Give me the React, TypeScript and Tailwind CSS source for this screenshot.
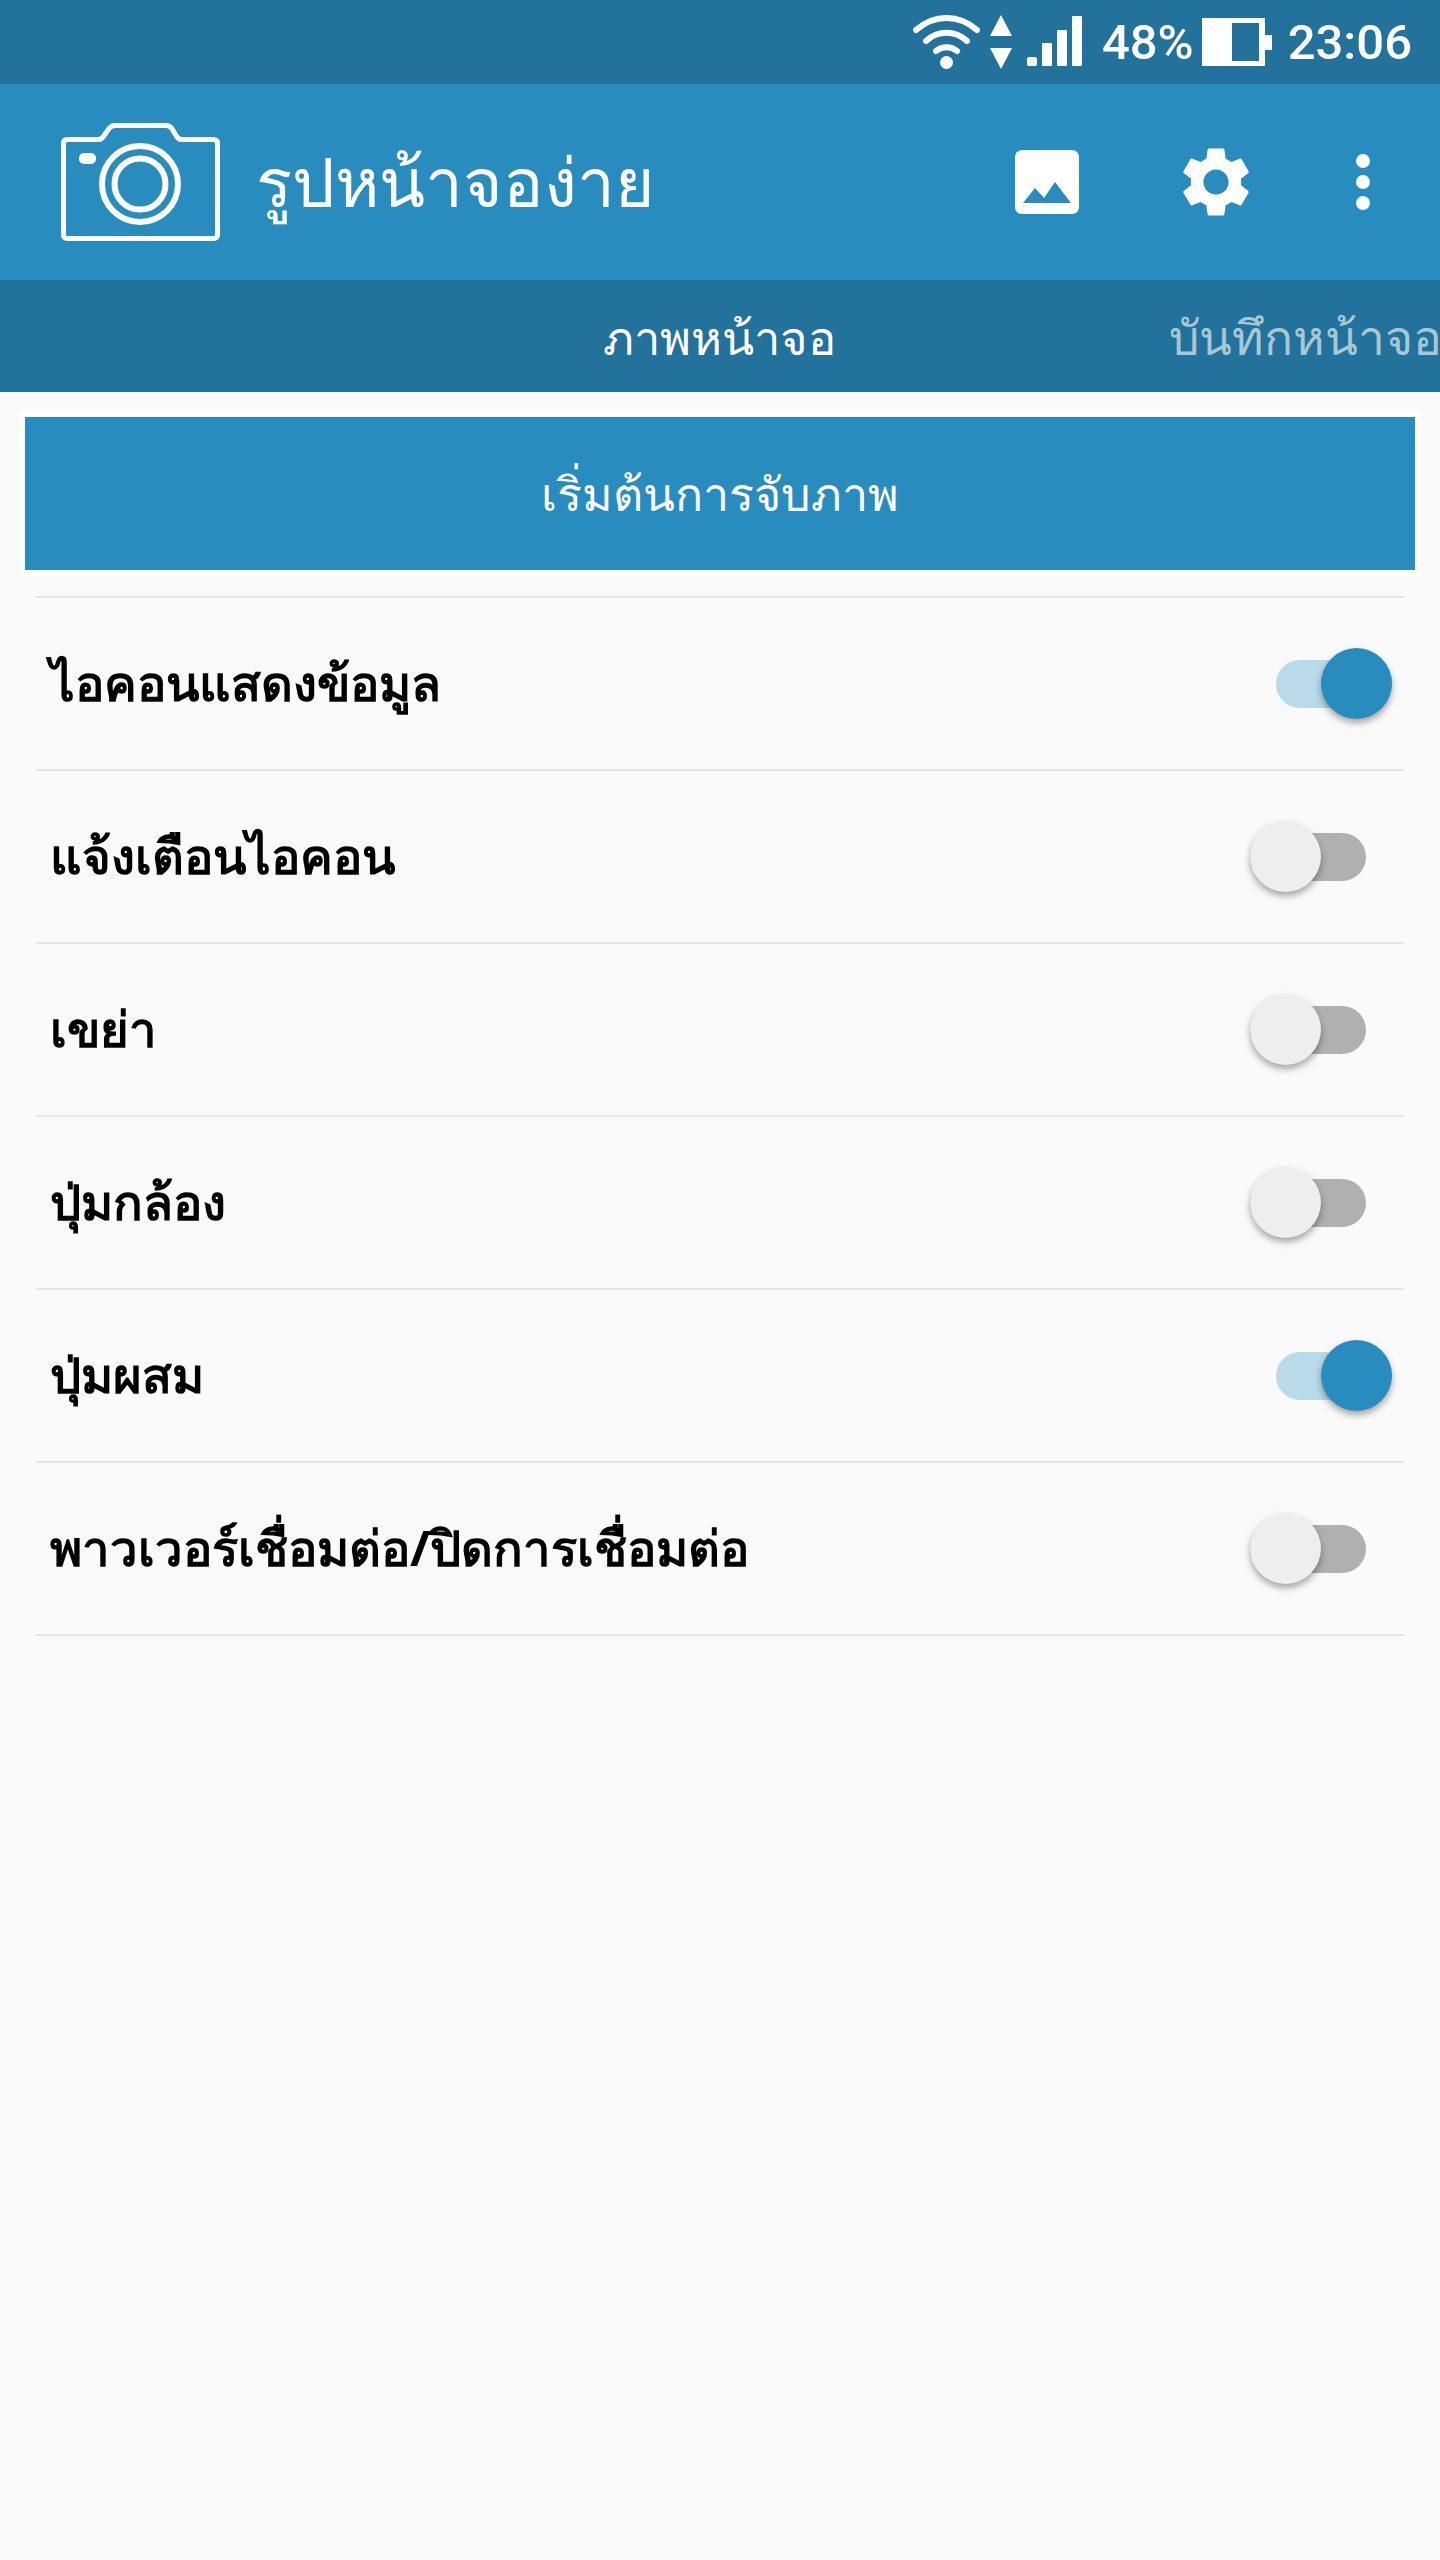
const rows = [
  { label: "ไอคอนแสดงข้อมูล", on: true },
  { label: "แจ้งเตือนไอคอน", on: false },
  { label: "เขย่า", on: false },
  { label: "ปุ่มกล้อง", on: false },
  { label: "ปุ่มผสม", on: true },
  { label: "พาวเวอร์เชื่อมต่อ/ปิดการเชื่อมต่อ", on: false },
];

function Toggle({ on }: { on: boolean }) {
  if (on) {
    return (
      <div className="relative w-[116px] h-[48px] rounded-full bg-[#b8dae9]">
        <div className="absolute right-0 top-[-12px] w-[71px] h-[71px] rounded-full bg-[#288cbe] shadow-[0_4px_7px_rgba(0,0,0,0.35)]" />
      </div>
    );
  }
  return (
    <div className="relative w-[116px] h-[48px] rounded-full bg-[#b0b0b0]">
      <div className="absolute left-0 top-[-12px] w-[71px] h-[71px] rounded-full bg-[#eeeeee] shadow-[0_4px_7px_rgba(0,0,0,0.35)]" />
    </div>
  );
}

function StatusBar() {
  return (
    <div className="h-[84px] bg-[#22729b] flex items-center justify-end pr-[28px] text-white font-['Roboto',sans-serif] font-medium">
      <svg width="67" height="54" viewBox="0 0 67 54" fill="none" stroke="white" strokeWidth="6" strokeLinecap="round" className="mr-[10px]">
        <path d="M3 15C21 -1 46 -1 64 15" />
        <path d="M13 26C25 15 42 15 54 26" />
        <path d="M23 36C29 31 38 31 44 36" />
        <circle cx="33.500" cy="47.500" r="6.500" fill="white" stroke="none" />
      </svg>
      <svg width="22" height="54" viewBox="0 0 22 54" fill="white" className="mr-[15px]">
        <path d="M11 0L22 21H0Z" />
        <path d="M11 54L22 33H0Z" />
      </svg>
      <svg width="55" height="50" viewBox="0 0 55 50" fill="white" className="mr-[20px] mt-[-2px]">
        <rect x="0" y="41" width="10" height="9" rx="2" />
        <rect x="15" y="27" width="10" height="23" rx="1" />
        <rect x="30" y="14" width="10" height="36" rx="1" />
        <rect x="45" y="0" width="10" height="50" rx="1" />
      </svg>
      <span className="leading-none mr-[8px] text-[49px]">48%</span>
      <svg width="70" height="48" viewBox="0 0 70 48" className="mr-[16px]">
        <path fillRule="evenodd" fill="white" d="M0 0H63V17H70V32H63V48H0ZM30 5V43H57V5Z" />
      </svg>
      <span className="leading-none text-[49px]">23:06</span>
    </div>
  );
}

function AppBar() {
  return (
    <div className="h-[196px] bg-[#288cbe] flex items-center text-white">
      <svg width="159" height="118" viewBox="0 0 159 118" fill="none" stroke="white" strokeWidth="5" className="ml-[61px] mt-[-1px] shrink-0">
        <path strokeLinejoin="round" d="M6 16.500H37C39.500 16.500 41 15.500 42 14L48.500 5C50 3.200 51.500 2.500 54 2.500H105C107.500 2.500 109 3.200 110.500 5L116 14C117 15.500 118.500 16.500 121 16.500H152.500C155 16.500 156.500 18 156.500 20.500V111.500C156.500 114 155 115.500 152.500 115.500H6.500C4 115.500 2.500 114 2.500 111.500V20.500C2.500 18 3.500 16.500 6 16.500Z" />
        <circle cx="79" cy="61" r="38" strokeWidth="6" />
        <circle cx="79" cy="61" r="25.500" strokeWidth="6" />
        <rect x="18" y="30" width="17" height="11" rx="5" fill="white" stroke="none" />
      </svg>
      <span className="ml-[36px] text-[67.500px] leading-none font-['Noto_Sans',sans-serif]">รูปหน้าจอง่าย</span>
      <div className="ml-auto flex items-center">
        <svg width="64" height="64" viewBox="0 0 64 64" className="mr-[95px]">
          <path fill="white" d="M7 0H57C61 0 64 3 64 7V57C64 61 61 64 57 64H7C3 64 0 61 0 57V7C0 3 3 0 7 0Z" />
          <path fill="#288cbe" d="M8 53L20 38L29 48L40 32L56 53Z" />
        </svg>
        <svg width="84" height="84" viewBox="0 0 24 24" fill="white" className="mr-[98px]">
          <path d="M19.140 12.940c.04-.300.060-.610.060-.940 0-.320-.020-.640-.070-.940l2.030-1.580c.180-.140.230-.410.120-.610l-1.920-3.320c-.120-.220-.370-.290-.590-.220l-2.390.960c-.500-.380-1.030-.700-1.620-.940l-.360-2.540c-.040-.240-.240-.410-.480-.410h-3.840c-.240 0-.430.170-.470.410l-.360 2.540c-.590.240-1.130.570-1.620.940l-2.390-.960c-.220-.080-.470 0-.590.220L2.740 8.870c-.120.210-.080.470.120.610l2.030 1.580c-.050.300-.090.630-.090.940s.020.640.07.940l-2.030 1.580c-.180.140-.230.410-.120.610l1.920 3.320c.120.220.370.290.590.220l2.390-.960c.500.380 1.030.700 1.620.940l.360 2.540c.050.240.240.410.480.410h3.840c.240 0 .440-.170.470-.410l.360-2.540c.590-.240 1.130-.560 1.620-.940l2.390.960c.220.080.470 0 .590-.220l1.920-3.320c.120-.220.070-.470-.120-.610l-2.010-1.580zM12 15.600c-1.980 0-3.600-1.620-3.600-3.600s1.620-3.600 3.600-3.600 3.600 1.620 3.600 3.600-1.620 3.600-3.600 3.600z" />
        </svg>
        <div className="flex flex-col gap-[7px] mr-[70px]">
          <div className="w-[14px] h-[14px] rounded-full bg-white" />
          <div className="w-[14px] h-[14px] rounded-full bg-white" />
          <div className="w-[14px] h-[14px] rounded-full bg-white" />
        </div>
      </div>
    </div>
  );
}

function Tabs() {
  return (
    <div className="h-[112px] bg-[#22729b] flex items-center overflow-hidden font-['Noto_Sans',sans-serif] leading-none whitespace-nowrap pt-[2px]">
      <span className="ml-[603px] text-white text-[47px]">ภาพหน้าจอ</span>
      <span className="ml-[333px] text-[#a7c7d7] text-[48px]">บันทึกหน้าจอ</span>
    </div>
  );
}

export default function App() {
  return (
    <div className="w-[1440px] h-[2560px] bg-[#fafafa] font-['Noto_Sans',sans-serif]">
      <StatusBar />
      <AppBar />
      <Tabs />
      <div className="px-[25px] pt-[25px]">
        <div className="h-[153px] bg-[#288cbe] flex items-center justify-center text-white text-[46.500px] leading-none shadow-[0_0_0_6px_#ffffff]">
          เริ่มต้นการจับภาพ
        </div>
      </div>
      <div className="mx-[36px] mt-[26px] border-t-2 border-[#e6e6e6]">
        {rows.map((row) => (
          <div key={row.label} className="h-[173px] border-b-2 border-[#e6e6e6] flex items-center justify-between pl-[14px] pr-[12px]">
            <span className="text-[49px] font-bold text-black leading-none mt-[-3px]">{row.label}</span>
            <div className={row.on ? "" : "mr-[26px]"}>
              <Toggle on={row.on} />
            </div>
          </div>
        ))}
      </div>
    </div>
  );
}
